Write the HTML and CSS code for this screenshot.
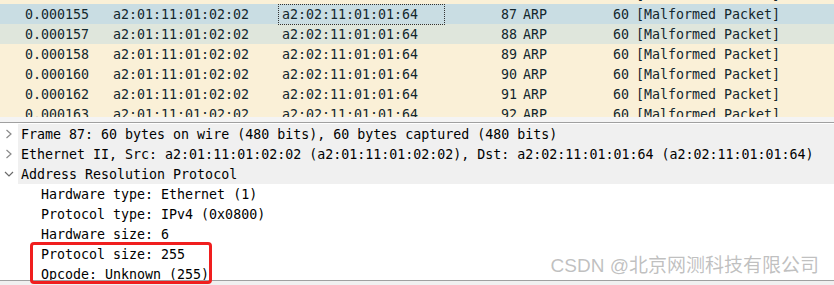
FILE: index.html
```html
<!DOCTYPE html>
<html lang="en">
<head>
  <meta charset="UTF-8">
  <title>ARP packet detail</title>
  <link rel="stylesheet" href="styles.css">
</head>
<body>
  <div class="window">
    <!-- packet list, scrolled so the previous row only shows its bottom -->
    <div class="packet-list">
      <div class="rows">
        <div class="row first">
          <span class="c-time">0.000153</span><span class="c-src">a2:01:11:01:02:02</span><span class="c-dst">a2:02:11:01:01:64</span><span class="c-no">86</span><span class="c-proto">ARP</span><span class="c-len">60</span><span class="c-info">[Malformed Packet]</span>
        </div>
        <div class="row selected">
          <span class="c-time">0.000155</span><span class="c-src">a2:01:11:01:02:02</span><span class="c-dst focus">a2:02:11:01:01:64</span><span class="c-no">87</span><span class="c-proto">ARP</span><span class="c-len">60</span><span class="c-info">[Malformed Packet]</span>
        </div>
        <div class="row hover">
          <span class="c-time">0.000157</span><span class="c-src">a2:01:11:01:02:02</span><span class="c-dst">a2:02:11:01:01:64</span><span class="c-no">88</span><span class="c-proto">ARP</span><span class="c-len">60</span><span class="c-info">[Malformed Packet]</span>
        </div>
        <div class="row">
          <span class="c-time">0.000158</span><span class="c-src">a2:01:11:01:02:02</span><span class="c-dst">a2:02:11:01:01:64</span><span class="c-no">89</span><span class="c-proto">ARP</span><span class="c-len">60</span><span class="c-info">[Malformed Packet]</span>
        </div>
        <div class="row">
          <span class="c-time">0.000160</span><span class="c-src">a2:01:11:01:02:02</span><span class="c-dst">a2:02:11:01:01:64</span><span class="c-no">90</span><span class="c-proto">ARP</span><span class="c-len">60</span><span class="c-info">[Malformed Packet]</span>
        </div>
        <div class="row">
          <span class="c-time">0.000162</span><span class="c-src">a2:01:11:01:02:02</span><span class="c-dst">a2:02:11:01:01:64</span><span class="c-no">91</span><span class="c-proto">ARP</span><span class="c-len">60</span><span class="c-info">[Malformed Packet]</span>
        </div>
        <div class="row">
          <span class="c-time">0.000163</span><span class="c-src">a2:01:11:01:02:02</span><span class="c-dst">a2:02:11:01:01:64</span><span class="c-no">92</span><span class="c-proto">ARP</span><span class="c-len">60</span><span class="c-info">[Malformed Packet]</span>
        </div>
      </div>
    </div>

    <div class="splitter"></div>

    <!-- packet details tree -->
    <div class="details">
      <div class="tree-row branch">
        <span class="arrow">
          <svg width="8" height="10" viewBox="0 0 8 10"><path d="M1.5 1 L6 5 L1.5 9" fill="none" stroke="#8a8a8a" stroke-width="1.2"/></svg>
        </span>
        <span class="label">Frame 87: 60 bytes on wire (480 bits), 60 bytes captured (480 bits)</span>
      </div>
      <div class="tree-row branch">
        <span class="arrow">
          <svg width="8" height="10" viewBox="0 0 8 10"><path d="M1.5 1 L6 5 L1.5 9" fill="none" stroke="#8a8a8a" stroke-width="1.2"/></svg>
        </span>
        <span class="label">Ethernet II, Src: a2:01:11:01:02:02 (a2:01:11:01:02:02), Dst: a2:02:11:01:01:64 (a2:02:11:01:01:64)</span>
      </div>
      <div class="tree-row branch">
        <span class="arrow">
          <svg width="10" height="8" viewBox="0 0 10 8"><path d="M1 2 L5 6 L9 2" fill="none" stroke="#6a6a6a" stroke-width="1.2"/></svg>
        </span>
        <span class="label">Address Resolution Protocol</span>
      </div>
      <div class="tree-row child"><span class="arrow"></span><span class="label">Hardware type: Ethernet (1)</span></div>
      <div class="tree-row child"><span class="arrow"></span><span class="label">Protocol type: IPv4 (0x0800)</span></div>
      <div class="tree-row child"><span class="arrow"></span><span class="label">Hardware size: 6</span></div>
      <div class="tree-row child"><span class="arrow"></span><span class="label">Protocol size: 255</span></div>
      <div class="tree-row child"><span class="arrow"></span><span class="label">Opcode: Unknown (255)</span></div>
    </div>

    <div class="status"></div>

    <!-- annotation and watermark drawn over the screenshot -->
    <div class="mark-box"></div>
    <div class="watermark">CSDN @北京网测科技有限公司</div>
  </div>
</body>
</html>
```

FILE: styles.css
```css
body {
  margin: 0;
  padding: 0;
  background: #f0f0f0;
  font-family: "DejaVu Sans Mono", "Liberation Mono", monospace;
  font-size: 13.3px;
}
.window {
  position: relative;
  width: 834px;
  height: 285px;
  overflow: hidden;
}
/* Packet list */
.packet-list {
  height: 117px;
  overflow: hidden;
  background: #faf0d7;
  color: #12272e;
}
.row {
  display: flex;
  height: 19px;
  padding-top: 1px;
  line-height: 20px;
  white-space: pre;
  background: #faf0d7;
}
.row.first {
  margin-top: -16px;
}
.row.selected {
  background: #c9dde3;
}
.row.hover {
  background: #dfe6dc;
}
.c-time {
  width: 89px;
  text-align: right;
}
.c-src {
  width: 166px;
  padding-left: 24px;
}
.c-dst {
  width: 162px;
  padding-left: 3px;
}
.c-dst.focus {
  outline: 1px dotted #333;
  outline-offset: 0;
}
.c-no {
  width: 73px;
  text-align: right;
}
.c-proto {
  width: 54px;
  padding-left: 6px;
}
.c-len {
  width: 52px;
  text-align: right;
}
.c-info {
  padding-left: 7px;
}
/* Splitter between panes */
.splitter {
  height: 5px;
  background: #f4f4f4;
  border-bottom: 1px solid #a0a0a0;
}
/* Packet details */
.details {
  height: 156px;
  padding-top: 1px;
  overflow: hidden;
  background: #ffffff;
  color: #000;
}
.tree-row {
  display: flex;
  height: 20px;
  line-height: 21px;
  white-space: pre;
}
.tree-row .arrow {
  width: 18px;
  display: flex;
  align-items: center;
  justify-content: center;
  background: #ffffff;
}
.tree-row .label {
  flex: 1;
  padding-left: 3px;
}
.tree-row.branch .label {
  background: #f0f0f0;
}
.tree-row.child .label {
  padding-left: 23px;
}
.status {
  height: 5px;
  border-top: 1px solid #a0a0a0;
  background: #f0f0f0;
}
/* Red annotation rectangle */
.mark-box {
  position: absolute;
  left: 30px;
  top: 242px;
  width: 176px;
  height: 36px;
  border: 3px solid #f01e1e;
  border-radius: 4px;
}
.watermark {
  position: absolute;
  right: 15px;
  top: 254px;
  font-family: "Liberation Sans", "Noto Sans CJK SC", sans-serif;
  font-size: 19px;
  line-height: 24px;
  color: rgba(130, 130, 130, 0.5);
  white-space: nowrap;
}
```
